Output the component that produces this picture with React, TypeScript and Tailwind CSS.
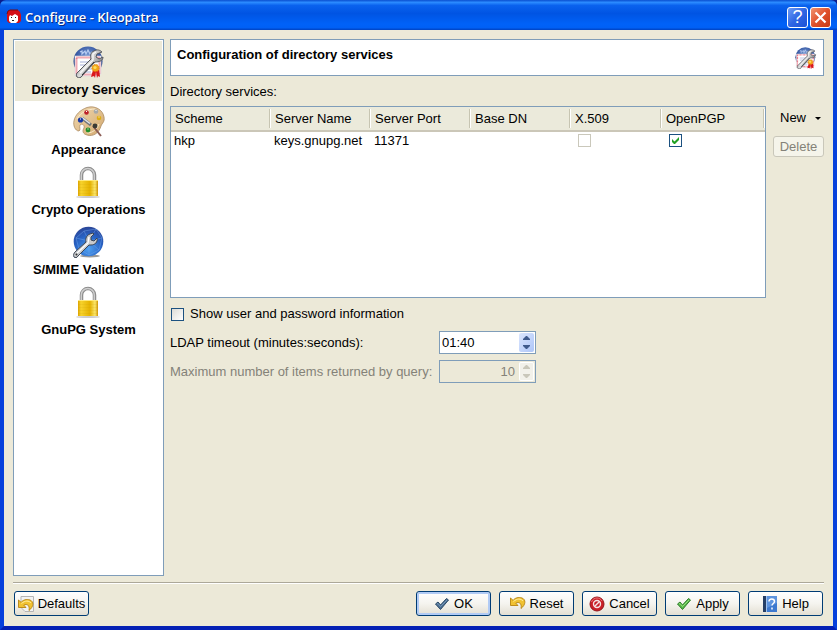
import React from "react";

function ServicesIcon({ size, id }: { size: number; id: string }) {
  return (
    <svg width={size} height={size} viewBox="0 0 32 32" aria-hidden="true">
      <defs>
        <radialGradient id={id + "globe"} cx="50%" cy="35%" r="65%">
          <stop offset="0" stopColor="#7d9fd8" />
          <stop offset="0.6" stopColor="#3a5ca6" />
          <stop offset="1" stopColor="#1b2e6e" />
        </radialGradient>
        <linearGradient id={id + "steel"} x1="0" y1="0" x2="1" y2="0.6">
          <stop offset="0" stopColor="#555" />
          <stop offset="0.5" stopColor="#ddd" />
          <stop offset="1" stopColor="#777" />
        </linearGradient>
      </defs>
      <circle cx="15" cy="15" r="14.500" fill={`url(#${id}globe)`} />
      <path d="M7 6l2-1v3l3-3 1 3 2-4 2 4 2-2" stroke="#b8cdf2" strokeWidth="1.200" fill="none" />
      <path d="M2 10h26v18l-3 2H2z" fill="#fff" stroke="#d8d8e0" strokeWidth="0.600" />
      <rect x="3.500" y="11.500" width="23" height="17" fill="#fff" stroke="#e4566a" strokeWidth="2" strokeDasharray="1 1" />
      <path d="M7 16h10M7 19h7M17 20h5M13 23h6M13 26h5" stroke="#a5aed8" strokeWidth="1" />
      <path
        d="M4 31c-1-1-1-3 0-4l14-14c-1-4 0-7 3-8 3-2 6-1 8 1l-5 2-1 3 3 2 4-2c0 4-4 5-8 5L9 30c-1 2-3 2-5 1z"
        fill={`url(#${id}steel)`}
        stroke="#55585e"
        strokeWidth="1"
      />
      <path d="M7 27l13-13V8l3-2" stroke="#f6f6f6" strokeWidth="1.400" fill="none" />
      <path d="M9 29l12-13" stroke="#33363b" strokeWidth="1" />
      <path d="M20 24l-2 7 3-1 1 2 1-6 1 6 1-2 2 1-1-7z" fill="#d9171c" />
      <circle cx="22.500" cy="22" r="3.600" fill="#f3a51b" stroke="#e28a10" strokeDasharray="1.500 1" />
      <circle cx="22" cy="21.500" r="1.600" fill="#fbdd5b" />
    </svg>
  );
}

function PaletteIcon() {
  return (
    <svg width="32" height="32" viewBox="0 0 32 32" aria-hidden="true">
      <defs>
        <linearGradient id="wood" x1="0" y1="0" x2="1" y2="1">
          <stop offset="0" stopColor="#f0d8b0" />
          <stop offset="1" stopColor="#d3a96f" />
        </linearGradient>
      </defs>
      <path
        d="M14 1.500C22-1 30 4 31 11c1 5-2 6-3 9-2 7-8 11-14 9-4-1-5-4-3-7 1-3-2-5-4-3-1 2 1 5-1 6C2 25 0 19 1 15 2 9 7 4 14 1.500z"
        fill="url(#wood)"
        stroke="#a98a62"
        strokeWidth="0.800"
      />
      <path d="M4 13C8 6 15 3 22 3M14 27c6 0 10-4 12-9" stroke="#f9ebcd" fill="none" />
      <path d="M20 20l8 10" stroke="#8b5c55" strokeWidth="2" />
      <path d="M9 12l9 7" stroke="#71757b" strokeWidth="3" />
      <path d="M9 11.500l8 6" stroke="#e4e6e9" strokeWidth="1.500" />
      <circle cx="13.500" cy="6.500" r="2.300" fill="#bd202a" />
      <circle cx="23" cy="5.500" r="2.300" fill="#a6a8a8" />
      <circle cx="26" cy="12" r="2.300" fill="#dfae13" />
      <circle cx="22" cy="20" r="2.400" fill="#393a35" />
      <circle cx="15" cy="24" r="2.400" fill="#248f2a" />
      <circle cx="7.500" cy="14" r="2.600" fill="#1838a6" />
      <path d="M13 5.500h1M22.500 4.500h1M25.500 11h1M14.500 23h1M7 13h1" stroke="#fff" />
    </svg>
  );
}

function LockIcon({ id }: { id: string }) {
  return (
    <svg width="32" height="32" viewBox="0 0 32 32" aria-hidden="true">
      <defs>
        <linearGradient id={id} x1="0" x2="1">
          <stop offset="0" stopColor="#dda300" />
          <stop offset="0.15" stopColor="#f7d32c" />
          <stop offset="0.6" stopColor="#e5b200" />
          <stop offset="0.85" stopColor="#fbe76b" />
          <stop offset="1" stopColor="#cf9300" />
        </linearGradient>
      </defs>
      <ellipse cx="15" cy="31" rx="12" ry="1" fill="#ccc" />
      <path d="M8.500 15V9a6.500 6.500 0 0 1 13 0v6" fill="none" stroke="#8c8c8c" strokeWidth="3.500" />
      <path d="M8.300 15V9a6.500 6.500 0 0 1 13 0v6" fill="none" stroke="#cecece" strokeWidth="1.500" />
      <rect x="5" y="14" width="20" height="16" fill={`url(#${id})`} />
      <path d="M5 14.500h20" stroke="#ffe97b" />
      <path d="M5 18.500h20M5 21.500h20M5 24.500h20M5 27.500h20" stroke="#c99100" strokeOpacity="0.12" />
    </svg>
  );
}

function GlobeIcon() {
  return (
    <svg width="32" height="32" viewBox="0 0 32 32" aria-hidden="true">
      <defs>
        <radialGradient id="sea" cx="50%" cy="75%" r="75%">
          <stop offset="0" stopColor="#4ea0f0" />
          <stop offset="0.6" stopColor="#2762c4" />
          <stop offset="1" stopColor="#2b4596" />
        </radialGradient>
      </defs>
      <ellipse cx="17" cy="30" rx="10" ry="1.500" fill="#999" />
      <circle cx="15.500" cy="15.500" r="14.800" fill="url(#sea)" />
      <path
        d="M3 12l8-7 12-2 6 9-3 12-10 5-10-6-3-11 13 3 13-3M11 5l5 10 7-12M16 15l10 9M6 23l10-8v14"
        fill="none"
        stroke="#77aaf0"
        strokeOpacity="0.7"
        strokeWidth="0.600"
      />
      <path
        d="M1 31c-1-2 0-4 1-5l11-10c-1-4 1-7 4-8l3-1 1 1-3 3v3l3 1 3-3c1 4-2 7-6 7l-2 0L5 30c-1 2-3 2-4 1z"
        fill="#c9cbcd"
        stroke="#3c4654"
        strokeWidth="1"
      />
      <path d="M4 27l11-10 1-6" stroke="#fff" strokeWidth="1.300" fill="none" />
      <circle cx="3.500" cy="28.500" r="1" fill="#333" />
    </svg>
  );
}

function UndoIcon({ page }: { page?: boolean }) {
  return (
    <svg width="16" height="16" viewBox="0 0 16 16" aria-hidden="true">
      {page && <path d="M3 0.500h12.500v15H7l-4-4z" fill="#f3f3f3" stroke="#b5b5b5" />}
      <g transform={page ? "translate(0 3)" : "translate(0 1)"}>
        <path
          d="M0.500 1v7.500H8L5.800 6.200C9 4.500 12 6 11 11.500c5-4 5-9 1-10.500C8.500-.3 5 1 3 3.300z"
          fill="#f1c232"
          stroke="#b78310"
          strokeWidth="0.900"
        />
        <path d="M3.500 4.500C7 1.300 11 1.500 13 4" fill="none" stroke="#fff0a2" strokeWidth="1" />
      </g>
    </svg>
  );
}

function TickIcon({ fill, edge, light }: { fill: string; edge: string; light: string }) {
  return (
    <svg width="16" height="16" viewBox="0 0 16 16" aria-hidden="true">
      <path d="M1.500 8L4 6l2.500 3L12.500 2.500l2 1.500-8 9.500z" fill={fill} stroke={edge} strokeWidth="1" strokeLinejoin="round" />
      <path d="M3 8l1-0.500 2.500 3L13 4" fill="none" stroke={light} strokeWidth="0.800" />
    </svg>
  );
}

function CancelIcon() {
  return (
    <svg width="16" height="16" viewBox="0 0 16 16" aria-hidden="true">
      <circle cx="8" cy="8" r="7" fill="#c91f27" stroke="#94161b" />
      <path d="M2.500 6C3.500 3 6 2 8 2s4 1 5 3" stroke="#ee7377" fill="none" />
      <circle cx="8" cy="8" r="3.500" fill="none" stroke="#f5e4e4" strokeWidth="1.400" />
      <path d="M5.500 10.500l5-5" stroke="#f5e4e4" strokeWidth="1.400" />
    </svg>
  );
}

function HelpIcon() {
  return (
    <svg width="16" height="16" viewBox="0 0 16 16" aria-hidden="true">
      <rect x="1" width="14" height="16" fill="#3d79cf" />
      <path d="M1 0h3v16H1z" fill="#263f66" />
      <path d="M4.500 0v16" stroke="#9fc1ee" />
      <path d="M5 0h10v7L5 12z" fill="#75a7e8" fillOpacity="0.6" />
      <path d="M7 5.500c0-3.500 5.500-3.300 5.500 0 0 2-2.500 2-2.500 4M10 11.500v2" fill="none" stroke="#fff" strokeWidth="1.500" />
    </svg>
  );
}

function AppIcon() {
  return (
    <svg width="16" height="16" viewBox="0 0 16 16" aria-hidden="true">
      <path d="M4 1h8l2 2 1 3v6l-2 2H3l-2-2V5l1-3z" fill="#d40f17" />
      <path d="M4 6l2 1 3-2 3 2v5l-2 2H5l-2-2V8z" fill="#fff" />
      <path d="M5 8.500h1M9 8.500h1M6 11.500h2" stroke="#222" />
      <path d="M1 5l1-3 2-1h8" stroke="#7b0c12" fill="none" />
    </svg>
  );
}

const pages = [
  { name: "Directory Services", icon: <ServicesIcon size={32} id="nav" /> },
  { name: "Appearance", icon: <PaletteIcon /> },
  { name: "Crypto Operations", icon: <LockIcon id="lock1" /> },
  { name: "S/MIME Validation", icon: <GlobeIcon /> },
  { name: "GnuPG System", icon: <LockIcon id="lock2" /> },
];

const columns = [
  { name: "Scheme", width: "w-[100px]" },
  { name: "Server Name", width: "w-[100px]" },
  { name: "Server Port", width: "w-[100px]" },
  { name: "Base DN", width: "w-[100px]" },
  { name: "X.509", width: "w-[91px]" },
  { name: "OpenPGP", width: "" },
];

const tick = (
  <svg className="pointer-events-none absolute" width="13" height="13" viewBox="0 0 13 13" aria-hidden="true">
    <path d="M3 5v3l2 2h1l4-4V3L5.500 7.500z" fill="#21a121" />
  </svg>
);

function PushButton({ label, icon, primary }: { label: string; icon: React.ReactNode; primary?: boolean }) {
  return (
    <button
      className={`flex h-[25px] w-[75px] items-center justify-center gap-1 rounded-[3px] border border-[#003c74] bg-linear-to-b from-white via-[#f5f4ef] to-[#e3dfd3] whitespace-nowrap ${
        primary ? "shadow-[inset_0_0_0_2px_#b1cbf5]" : ""
      }`}
    >
      {icon}
      {label}
    </button>
  );
}

function SpinBox({ id, value, disabled }: { id: string; value: string; disabled?: boolean }) {
  const [text, setText] = React.useState(value);
  return (
    <div className={`flex h-[23px] w-[97px] border border-[#7f9db9] p-px ${disabled ? "" : "bg-white"}`}>
      <input
        id={id}
        value={text}
        disabled={disabled}
        onChange={(e) => setText(e.target.value)}
        className={`min-w-0 flex-1 outline-none ${disabled ? "pr-1 text-right text-[#848278]" : "pl-px"}`}
      />
      <div
        className={`flex w-[15px] flex-col rounded-xs ${
          disabled ? "bg-[#f2f1ea] text-[#c9c7ba] ring-1 ring-white ring-inset" : "bg-linear-to-br from-[#dbe6fe] to-[#adc5f8] text-[#3f5a8d]"
        }`}
      >
        <button aria-label="Increase" disabled={disabled} className="flex flex-1 items-center justify-center">
          <svg width="7" height="4" viewBox="0 0 7 4">
            <path d="M0 4V3l3-3h1l3 3v1z" fill="currentColor" />
          </svg>
        </button>
        <button aria-label="Decrease" disabled={disabled} className="flex flex-1 items-center justify-center">
          <svg width="7" height="4" viewBox="0 0 7 4">
            <path d="M0 0v1l3 3h1l3-3V0z" fill="currentColor" />
          </svg>
        </button>
      </div>
    </div>
  );
}

export default function App() {
  const [page, setPage] = React.useState(pages[0].name);
  const [showInfo, setShowInfo] = React.useState(false);
  const [openpgp, setOpenpgp] = React.useState(true);

  return (
    <div className="flex min-h-screen flex-col bg-[#0a1c8c] font-['Liberation_Sans',Arial,sans-serif] text-[13px] leading-4 text-black">
      <header className="flex h-[30px] items-center rounded-t-md bg-[linear-gradient(#0a4fd0,#2b8bff_8%,#0a62ee_18%,#0054e3_45%,#0062f8_80%,#0060f5_92%,#0042c0)] pt-1 pr-[6px] pl-[6px]">
        <AppIcon />
        <h1 className="flex-1 pl-[3px] font-['Open_Sans','Noto_Sans',sans-serif] text-[13px] font-semibold text-white [text-shadow:1px_1px_#0a2a80]">
          Configure - Kleopatra
        </h1>
        <div className="flex gap-0.5">
          <button
            aria-label="Help"
            className="flex size-[21px] items-center justify-center rounded-[3px] border border-white bg-linear-to-br from-[#6d9bf5] via-[#2f66e4] to-[#1b51d6] text-lg text-white"
          >
            ?
          </button>
          <button
            aria-label="Close"
            className="flex size-[21px] items-center justify-center rounded-[3px] border border-white bg-linear-to-br from-[#f0936f] via-[#e0512b] to-[#c63a12]"
          >
            <svg width="13" height="13" viewBox="0 0 13 13" aria-hidden="true">
              <path d="M1.500 1.500l10 10M11.500 1.500l-10 10" stroke="#fff" strokeWidth="2.200" />
            </svg>
          </button>
        </div>
      </header>

      <div className="flex flex-1 flex-col border-x-4 border-b-4 border-x-[#0640dc] border-b-[#0420b4] bg-[#ece9d8] px-[9px] pt-[9px] pb-[10px]">
        <div className="flex flex-1 gap-[6px]">
          <nav className="w-[151px] shrink-0 border border-[#7f9db9] bg-white p-px">
            {pages.map((item) => (
              <button
                key={item.name}
                onClick={() => setPage(item.name)}
                className={`flex h-[60px] w-full flex-col items-center gap-1 pt-[5px] font-bold whitespace-nowrap ${
                  page === item.name ? "bg-[#ece9d8]" : ""
                }`}
              >
                {item.icon}
                {item.name}
              </button>
            ))}
          </nav>

          <main className="flex min-w-0 flex-1 flex-col">
            <div className="flex h-[37px] items-center justify-between border border-[#7f9db9] bg-white px-[6px]">
              <h2 className="pb-[6px] font-bold">Configuration of directory services</h2>
              <ServicesIcon size={22} id="head" />
            </div>
            <h3 className="pt-2 pb-[6px]">Directory services:</h3>

            <div className="flex gap-[7px]">
              <div className="h-[192px] min-w-0 flex-1 border border-[#7f9db9] bg-white">
                <table className="w-full table-fixed border-separate border-spacing-0 text-left">
                  <thead>
                    <tr className="h-[25px] bg-[#ebeadb]">
                      {columns.map((col) => (
                        <th
                          key={col.name}
                          className={`border-b-2 border-[#cbc7b8] bg-[linear-gradient(to_right,#c7c5b2_50%,#fff_50%)] bg-[length:2px_19px] bg-[position:right_2px] bg-no-repeat p-0 pt-px pl-1 font-normal ${col.width}`}
                        >
                          {col.name}
                        </th>
                      ))}
                    </tr>
                  </thead>
                  <tbody>
                    <tr className="h-[17px]">
                      <td className="p-0 pl-[3px]">hkp</td>
                      <td className="p-0 pl-[3px]">keys.gnupg.net</td>
                      <td className="p-0 pl-[3px]">11371</td>
                      <td></td>
                      <td className="p-0 pl-[7px]">
                        <input
                          type="checkbox"
                          aria-label="X.509"
                          disabled
                          className="block size-[13px] appearance-none border border-[#cac8bb] bg-white"
                        />
                      </td>
                      <td className="p-0 pl-[7px]">
                        <div className="relative size-[13px]">
                          {openpgp && tick}
                          <input
                            type="checkbox"
                            aria-label="OpenPGP"
                            checked={openpgp}
                            onChange={() => setOpenpgp(!openpgp)}
                            className="block size-[13px] appearance-none border border-[#1c5180]"
                          />
                        </div>
                      </td>
                    </tr>
                  </tbody>
                </table>
              </div>
              <div className="flex w-[51px] flex-col gap-[6px]">
                <button className="flex h-6 items-center justify-between pr-[3px] pl-[7px]">
                  New
                  <svg width="6" height="3" viewBox="0 0 6 3" aria-hidden="true">
                    <path d="M0 0h6L3 3z" />
                  </svg>
                </button>
                <button disabled className="h-[21px] rounded-[3px] border border-[#c9c7ba] bg-[#f5f4ea] text-[#848278]">
                  Delete
                </button>
              </div>
            </div>

            <label className="flex items-center gap-[6px] pt-2 pl-px">
              <span className="relative size-[13px]">
                {showInfo && tick}
                <input
                  type="checkbox"
                  checked={showInfo}
                  onChange={() => setShowInfo(!showInfo)}
                  className="block size-[13px] appearance-none border border-[#1c5180] bg-linear-to-br from-[#dcdcd7] to-white"
                />
              </span>
              Show user and password information
            </label>
            <div className="flex items-center pt-[9px]">
              <label htmlFor="timeout" className="w-[269px]">
                LDAP timeout (minutes:seconds):
              </label>
              <SpinBox id="timeout" value="01:40" />
            </div>
            <div className="flex items-center pt-[6px]">
              <label htmlFor="max" className="w-[269px] whitespace-nowrap text-[#848278]">
                Maximum number of items returned by query:
              </label>
              <SpinBox id="max" value="10" disabled />
            </div>
          </main>
        </div>

        <footer className="mt-[6px] flex gap-2 border-t border-[#aca899] px-px pt-2 shadow-[inset_0_1px_#fff]">
          <PushButton label="Defaults" icon={<UndoIcon page />} />
          <div className="flex flex-1 justify-end gap-2">
            <PushButton label="OK" icon={<TickIcon fill="#4c6f94" edge="#2b4966" light="#82a2c0" />} primary />
            <PushButton label="Reset" icon={<UndoIcon />} />
            <PushButton label="Cancel" icon={<CancelIcon />} />
            <PushButton label="Apply" icon={<TickIcon fill="#57b947" edge="#2f7d2b" light="#a5e58b" />} />
            <PushButton label="Help" icon={<HelpIcon />} />
          </div>
        </footer>
      </div>
    </div>
  );
}
